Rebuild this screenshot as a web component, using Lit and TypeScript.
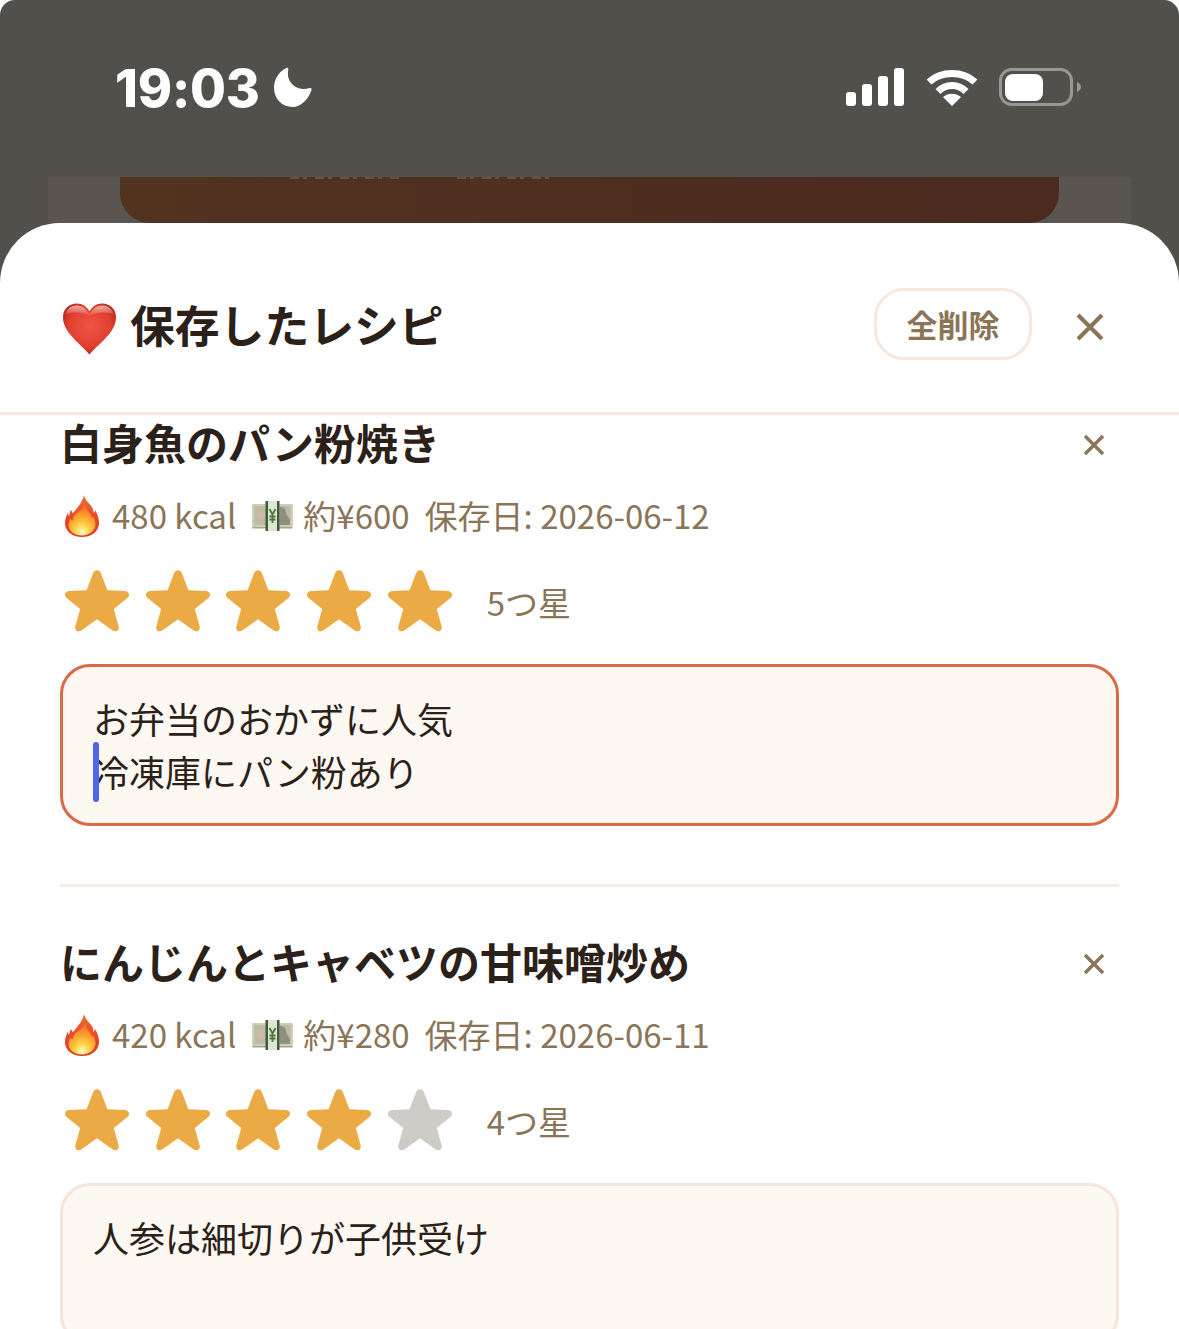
import {LitElement, html, css, svg} from 'lit';
import {customElement} from 'lit/decorators.js';

interface Recipe {
  title: string;
  kcal: number;
  price: number;
  saved: string;
  stars: number;
  note: string[];
  focused: boolean;
}

const RECIPES: Recipe[] = [
  {title: '白身魚のパン粉焼き', kcal: 480, price: 600, saved: '2026-06-12', stars: 5, note: ['お弁当のおかずに人気', '冷凍庫にパン粉あり'], focused: true},
  {title: 'にんじんとキャベツの甘味噌炒め', kcal: 420, price: 280, saved: '2026-06-11', stars: 4, note: ['人参は細切りが子供受け'], focused: false},
];

const STAR = 'M12 1.6c.7 0 1.2.4 1.5 1.2l2.4 6.3 6.5.3c1.6.1 2.2 1.6 1 2.6l-5.1 4.1 1.8 6.5c.4 1.5-1 2.4-2.2 1.6L12 20l-5.9 4.2c-1.2.8-2.6-.1-2.2-1.6l1.8-6.5-5.1-4.1c-1.2-1-.6-2.5 1-2.6l6.5-.3 2.4-6.3c.3-.8.8-1.2 1.5-1.2z';

const heart = svg`<svg class="heart" viewBox="0 0 56 54">
  <defs><radialGradient id="hg" cx=".5" cy=".45" r=".62"><stop offset="0" stop-color="#ee5544"/><stop offset=".65" stop-color="#e0402f"/><stop offset="1" stop-color="#ae1d18"/></radialGradient>
  <linearGradient id="hs" x1="0" y1="0" x2="0" y2="1"><stop offset="0" stop-color="#fff" stop-opacity=".6"/><stop offset="1" stop-color="#fff" stop-opacity="0"/></linearGradient></defs>
  <path d="M28 53C20 43 1 31 1 15 1 6 8 1 15 1c6 0 10 3 13 8 3-5 7-8 13-8 7 0 14 5 14 14 0 16-19 28-27 38z" fill="url(#hg)"/>
  <path d="M15 3C9 3 4 7 3.500 13 8 9 20 9 28 14 36 9 48 9 52.500 13 52 7 47 3 41 3c-6 0-10 4-13 9C25 7 21 3 15 3z" fill="url(#hs)"/>
</svg>`;

const flame = svg`<svg class="emoji flame" viewBox="0 0 34 42">
  <defs>
    <linearGradient id="f1" x1="0" y1="0" x2="0" y2="1"><stop offset="0" stop-color="#f0702c"/><stop offset=".6" stop-color="#e8432a"/><stop offset="1" stop-color="#e23a24"/></linearGradient>
    <radialGradient id="f2" cx=".5" cy=".9" r=".8"><stop offset="0" stop-color="#fffbd0"/><stop offset=".3" stop-color="#ffd94e"/><stop offset=".65" stop-color="#fba52f"/><stop offset="1" stop-color="#f57a28"/></radialGradient>
  </defs>
  <path d="M19 0c1 5 5 8 8 12 1 2 1.500 4 1.500 6 .8-.8 1.300-1.800 1.500-3 2.500 4 4 8 4 13 0 8-7 14-17 14S0 36 0 28c0-4 1.500-7 2.500-10 .6 1 1 2 1.500 3 .8-2 .8-4 1.800-6 1 1 1.600 2 2 3.500C11 14 17.500 8 19 0z" fill="url(#f1)"/>
  <path d="M20 10c1 4 4 7 6 10 .5 1 .7 2 .7 3 .6-.4 1-1 1.300-1.700 1.500 2.500 2.500 4.500 2.500 7.700 0 6.500-6 11.500-13.500 11.500S3.500 36 3.500 30c0-2.500 1-4.500 2-6.500.5 1 1 1.800 1.700 2.500.5-2.500 1.500-5 3.500-7C14 16 18.500 14 20 10z" fill="url(#f2)"/>
</svg>`;

const money = svg`<svg class="emoji money" viewBox="0 0 41 30">
  <path d="M.5 3.500h40v24h-40z" fill="#a6a48d"/>
  <rect x=".5" y="3" width="40" height="23" rx="1" fill="#cfcdb2"/>
  <rect x="2.500" y="5" width="36" height="19" fill="#bdbaa5"/>
  <circle cx="9" cy="14.500" r="4.500" fill="#cdb9a5"/>
  <path d="M28 6c4 0 6 2.500 6 5.500 0 2 2.500 5 4 7.500v5H28z" fill="#8f8f82"/>
  <rect x="14.500" y="0" width="12" height="30" fill="#d9e8cf"/>
  <rect x="13.500" y="0" width="2.500" height="30" fill="#3e5a40"/>
  <rect x="25" y="0" width="2.500" height="30" fill="#3e5a40"/>
  <path d="M17.500 8l3 5.500 3-5.500M20.500 13v9M17.500 15.500h6M17.500 18.500h6" fill="none" stroke="#56753c" stroke-width="1.800"/>
</svg>`;

@customElement('app-root')
export class AppRoot extends LitElement {
  static override styles = css`
    :host {
      display: block;
      width: 1179px;
      height: 1329px;
      overflow: hidden;
      background: #fff;
      font-family: "Noto Sans CJK JP", "Noto Sans", sans-serif;
      color: #2c2118;
    }
    .phone {
      height: 1329px;
      overflow: hidden;
      background: #52504b;
      border-radius: 15px 15px 0 0;
    }

    .status {
      height: 177px;
      box-sizing: border-box;
      padding: 63px 98px 0 115px;
      display: flex;
      justify-content: space-between;
      align-items: flex-start;
    }
    .clock {
      display: flex;
      align-items: center;
      gap: 12px;
      font: 800 52px/52px Inter, "Liberation Sans", sans-serif;
      letter-spacing: -0.2px;
      color: #fff;
    }
    .moon { width: 42px; height: 42px; margin-top: -2px; }
    .indicators { display: flex; align-items: center; gap: 20px; margin: 5px 0 0; }
    .signal { width: 60px; height: 38px; }
    .wifi { width: 52px; height: 38px; }
    .battery { width: 82px; height: 38px; margin-left: 1px; }

    .backdrop {
      height: 46px;
      margin: 0 48px;
      padding: 0 72px;
      background: #5a5551;
    }
    .behind-card {
      height: 46px;
      background: linear-gradient(90deg, #523320, #4b2a1f);
      border-radius: 0 0 30px 30px;
    }
    /* bottom edge of the text that scrolled under the status bar */
    .clipped-text {
      display: flex;
      height: 2px;
      padding-left: 170px;
      gap: 55px;
    }
    .clipped-text span {
      height: 2px;
      background: repeating-linear-gradient(90deg, #66503f 0 9px, transparent 9px 13px, #66503f 13px 17px, transparent 17px 25px);
    }

    .sheet {
      background: #fff;
      border-radius: 60px 60px 0 0;
      height: 1106px;
      overflow: hidden;
    }
    .sheet-head {
      height: 192px;
      box-sizing: border-box;
      padding: 65px 60px 0 62px;
      display: flex;
      align-items: flex-start;
      border-bottom: 3px solid #f9e8e2;
    }
    .heart { width: 55px; height: 54px; margin-top: 14px; flex: none; }
    h1 {
      margin: -2px 0 0 13px;
      flex: 1;
      font-size: 44.8px;
      font-weight: 700;
      line-height: 76px;
    }
    .clear-all {
      width: 158px;
      height: 72px;
      box-sizing: border-box;
      border: 3px solid #f7e7df;
      border-radius: 30px;
      background: #fff;
      color: #8a7558;
      font: 600 31px/64px "Noto Sans CJK JP", sans-serif;
      padding: 0;
    }
    .close {
      width: 30px;
      height: 30px;
      margin: 24px 14px 0 43px;
      display: block;
    }

    .list { padding: 0 60px; margin-top: -9px; }
    .recipe { padding-bottom: 58px; border-bottom: 3px solid #f9ebe5; }
    .recipe + .recipe { border-bottom: 0; padding-top: 38px; }
    .title-row { display: flex; justify-content: space-between; align-items: center; height: 72px; }
    h2 {
      margin: 0;
      font-size: 42px;
      font-weight: 700;
      line-height: 72px;
    }
    .remove { width: 22px; height: 22px; margin: 6px 14px 0 0; display: block; }
    .meta {
      display: flex;
      align-items: center;
      height: 54px;
      margin-top: 10px;
      font-size: 33px;
      color: #8a7558;
      white-space: nowrap;
    }
    .meta .item { display: flex; align-items: center; margin-right: 15px; }
    .emoji { display: block; flex: none; }
    .flame { width: 34px; height: 42px; margin: 2px 13px 0 5px; }
    .money { width: 41px; height: 30px; margin: 2px 10px 0 1px; }
    .rating { display: flex; align-items: center; margin-top: 25px; height: 64px; }
    .stars { display: flex; gap: 16.7px; margin-left: 5px; }
    .star { width: 64px; height: 66.7px; display: block; }
    .on { fill: #ebaa44; }
    .off { fill: #cfccc7; }
    .rating-label { margin: 6px 0 0 35px; font-size: 33px; color: #8a7558; line-height: 64px; }
    .note {
      position: relative;
      box-sizing: border-box;
      margin-top: 33px;
      height: 162px;
      padding: 25px 30px;
      border: 3px solid #f7e4da;
      border-radius: 30px;
      background: #fdf8f1;
      font-size: 36px;
      line-height: 53px;
      color: #2c2118;
    }
    .note.focused { border-color: #d96a48; }
    .caret {
      position: absolute;
      left: 30px;
      top: 75px;
      width: 6px;
      height: 60px;
      border-radius: 3px;
      background: #4c68e8;
    }
  `;

  private renderRecipe(r: Recipe) {
    return html`
      <section class="recipe">
        <div class="title-row">
          <h2>${r.title}</h2>
          <svg class="remove" viewBox="0 0 22 22"><path d="M2 2l18 18M20 2L2 20" stroke="#8a7558" stroke-width="3.400" fill="none"/></svg>
        </div>
        <div class="meta">
          ${flame}<span class="item">${r.kcal} kcal</span>
          ${money}<span class="item">約¥${r.price}</span>
          <span class="item">保存日: ${r.saved}</span>
        </div>
        <div class="rating">
          <div class="stars">
            ${[1, 2, 3, 4, 5].map(
              (n) => html`<svg class="star" viewBox="0 0 24 25"><path class=${n <= r.stars ? 'on' : 'off'} d=${STAR}/></svg>`
            )}
          </div>
          <span class="rating-label">${r.stars}つ星</span>
        </div>
        <div class="note ${r.focused ? 'focused' : ''}">
          ${r.note.map((line) => html`<div>${line}</div>`)}
          ${r.focused ? html`<span class="caret"></span>` : ''}
        </div>
      </section>
    `;
  }

  override render() {
    return html`
      <div class="phone">
        <header class="status">
          <div class="clock">
            <span>19:03</span>
            <svg class="moon" viewBox="0 0 42 42"><path fill="#fff" d="M14.500 1c1.200-.5 2 .3 1.800 1.500-.6 3-.6 6 .4 9 2 6 8 10.500 15 10.500 2 0 4-.3 6-.9 1.300-.4 2.300.6 1.800 1.800C37 31 29.500 40 20.500 40 9.500 40 2 31 2 21 2 12 7 4.500 14.500 1z"/></svg>
          </div>
          <div class="indicators">
            <svg class="signal" viewBox="0 0 60 38"><g fill="#fff"><rect x="0" y="24" width="10" height="14" rx="3"/><rect x="16" y="16" width="10" height="22" rx="3"/><rect x="32" y="8" width="10" height="30" rx="3"/><rect x="48" y="0" width="10" height="38" rx="3"/></g></svg>
            <svg class="wifi" viewBox="0 0 52 38"><g fill="none" stroke="#fff" stroke-width="7"><path d="M3 14C15 2.500 37 2.500 49 14"/><path d="M12 23.500c8-8 20-8 28 0"/></g><path fill="#fff" d="M26 38l-9-9c5-4.500 13-4.500 18 0z"/></svg>
            <svg class="battery" viewBox="0 0 82 38"><rect x="1.500" y="1.500" width="71" height="35" rx="11" fill="none" stroke="#989793" stroke-width="3"/><rect x="6" y="6" width="38" height="27" rx="8" fill="#fff"/><path d="M78 14c2.500 1 4 3 4 5s-1.500 4-4 5z" fill="#989793"/></svg>
          </div>
        </header>
        <div class="backdrop">
          <div class="behind-card">
            <div class="clipped-text"><span style="width:112px"></span><span style="width:100px"></span></div>
          </div>
        </div>
        <div class="sheet">
          <div class="sheet-head">
            ${heart}
            <h1>保存したレシピ</h1>
            <button class="clear-all">全削除</button>
            <svg class="close" viewBox="0 0 30 30"><path d="M3 3l24 24M27 3L3 27" stroke="#8a7558" stroke-width="4.200" fill="none"/></svg>
          </div>
          <div class="list">${RECIPES.map((r) => this.renderRecipe(r))}</div>
        </div>
      </div>
    `;
  }
}

declare global {
  interface HTMLElementTagNameMap {
    'app-root': AppRoot;
  }
}
